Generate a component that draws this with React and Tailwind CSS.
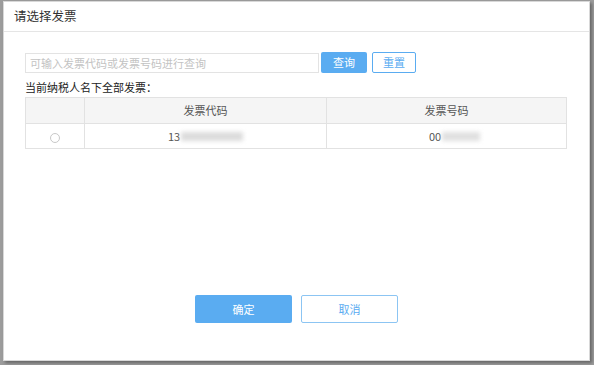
export default function App() {
  const font = { fontFamily: '"Noto Sans CJK SC", "Noto Sans", sans-serif' };
  return (
    <div className="w-[594px] h-[365px] bg-[#9c9c9c] pl-[3px] pt-[1px] overflow-hidden" style={font}>
      <div className="w-[587px] h-[360px] bg-white flex flex-col border border-[#d8d8d8] shadow-[2px_2px_3px_rgba(0,0,0,0.35)]">
        <div className="h-[30px] border-b border-[#e5e5e5] flex items-center pl-[10px] text-[12.5px] text-[#333]">
          请选择发票
        </div>
        <div className="flex-1 flex flex-col px-[21px] pt-[20px]">
          <div className="flex items-center">
            <input
              className="w-[294px] h-[20px] border border-[#e3e3e3] px-[4px] text-[11px] text-[#333] placeholder:text-[#c3c3c3] outline-none"
              style={font}
              placeholder="可输入发票代码或发票号码进行查询"
            />
            <button className="ml-[2px] w-[46px] h-[21px] rounded-[2px] bg-[#5aacf1] text-white text-[11px]">查询</button>
            <button className="ml-[5px] w-[44px] h-[21px] rounded-[2px] border border-[#5aacf1] bg-white text-[#5aacf1] text-[11px]">重置</button>
          </div>
          <div className="mt-[6px] text-[11px] text-[#222] leading-[16px]">当前纳税人名下全部发票：</div>
          <table className="w-[542px] mt-[2px] border-collapse text-[11px] text-[#555]">
            <thead>
              <tr className="h-[26px] bg-[#f5f5f5]">
                <th className="w-[59px] border border-[#e2e2e2] font-normal"></th>
                <th className="w-[242px] border border-[#e2e2e2] font-normal">发票代码</th>
                <th className="border border-[#e2e2e2] font-normal">发票号码</th>
              </tr>
            </thead>
            <tbody>
              <tr className="h-[25px]">
                <td className="border border-[#e2e2e2] text-center">
                  <span className="inline-block w-[10px] h-[10px] rounded-full border border-[#c8c8c8] align-middle"></span>
                </td>
                <td className="border border-[#e2e2e2] text-center">
                  <span className="inline-flex items-center">
                    13
                    <span className="ml-[1px] inline-block w-[62px] h-[9px] bg-[#dcdcdc] blur-[2px]"></span>
                  </span>
                </td>
                <td className="border border-[#e2e2e2] text-center">
                  <span className="inline-flex items-center pl-[16px]">
                    00
                    <span className="ml-[1px] inline-block w-[38px] h-[9px] bg-[#e0e0e0] blur-[2px]"></span>
                  </span>
                </td>
              </tr>
            </tbody>
          </table>
          <div className="mt-auto mb-[37px] flex justify-center gap-[9px]">
            <button className="w-[97px] h-[28px] rounded-[2px] bg-[#5aacf1] text-white text-[11px]">确定</button>
            <button className="w-[97px] h-[28px] rounded-[2px] border border-[#8cc5f3] bg-white text-[#5aacf1] text-[11px]">取消</button>
          </div>
        </div>
      </div>
    </div>
  );
}
